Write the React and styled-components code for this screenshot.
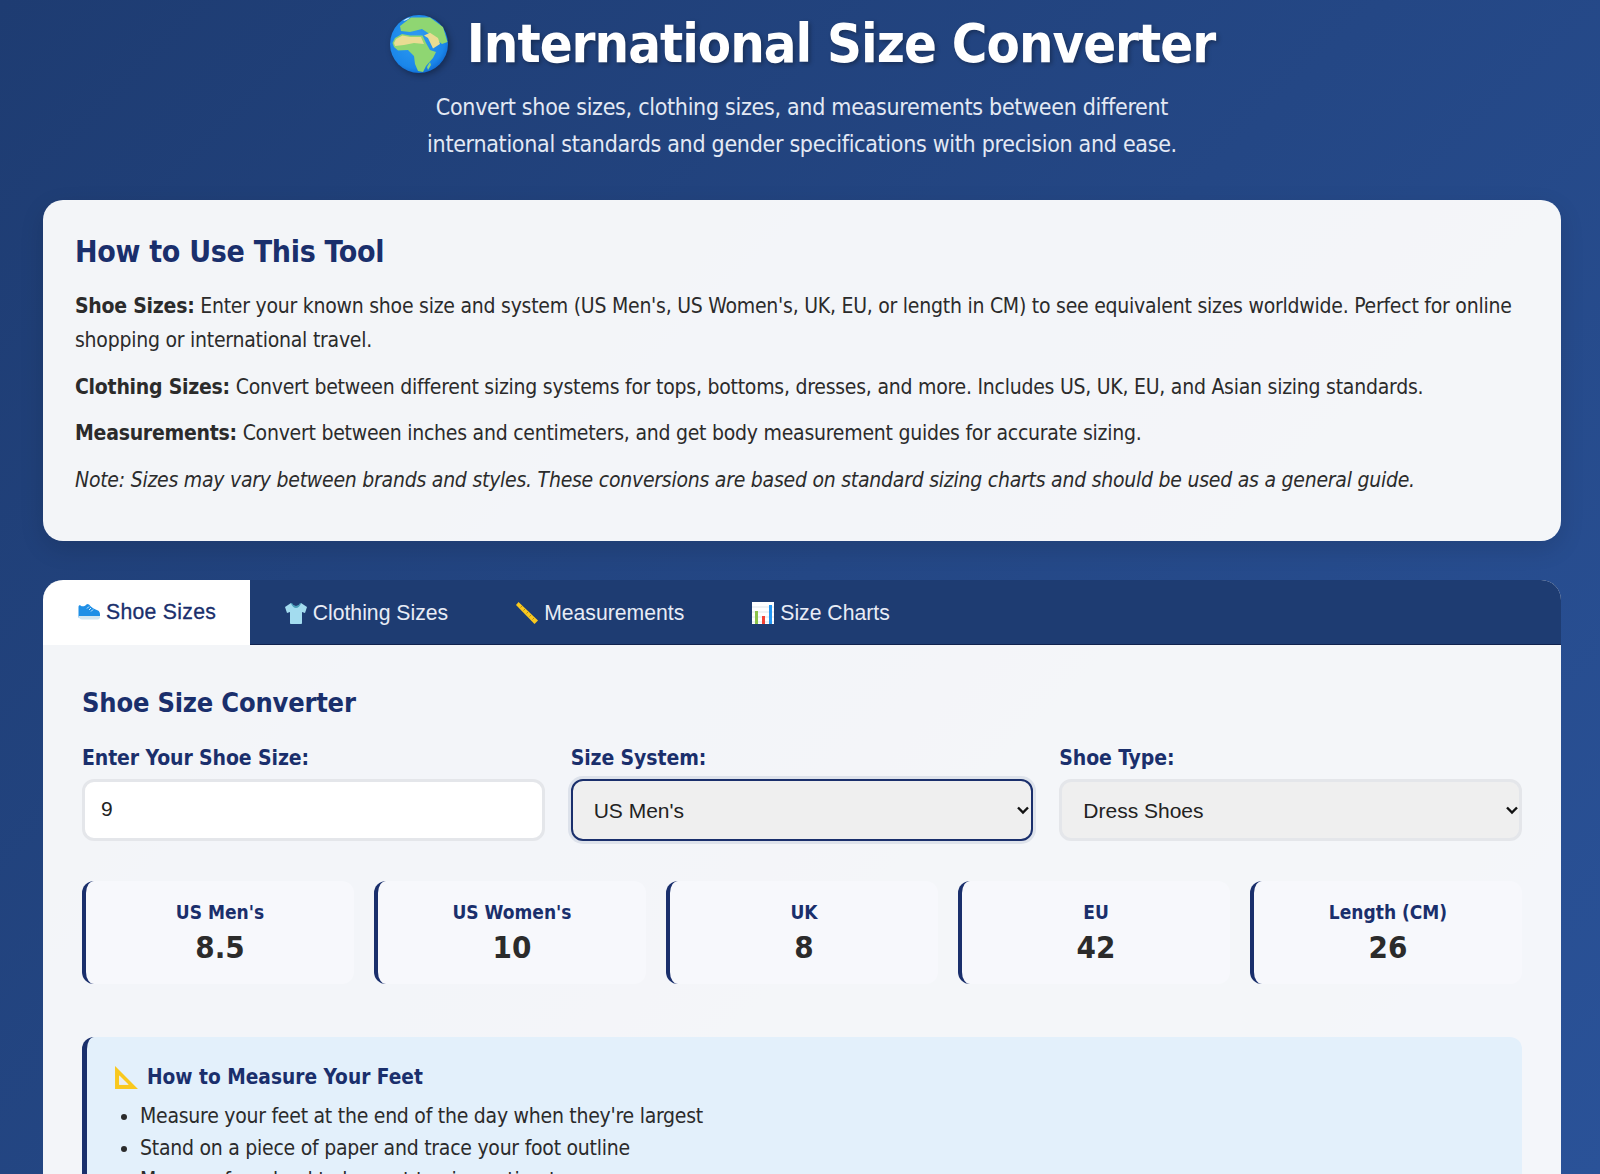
import React from "react";
import styled, { createGlobalStyle } from "styled-components";

const Global = createGlobalStyle`
  html, body { margin: 0; padding: 0; height: 1174px; overflow: hidden; }
  body { font-family: "DejaVu Sans Condensed", "DejaVu Sans", sans-serif; font-stretch: condensed; background: linear-gradient(135deg, #1e3c72 0%, #2a5298 100%); color: #222; }
  * { box-sizing: border-box; }
`;
const navy = "#1a2f6c";
const Page = styled.div`padding: 0 39px 0 43px;`;
const Header = styled.header`text-align: center; padding-top: 10px; margin-bottom: 38px; color: #fff;`;
const Title = styled.h1`
  margin: 0 0 11px; display: flex; justify-content: center; align-items: center; gap: 18px;
  font-size: 54px; letter-spacing: -1px; line-height: 68px; font-weight: 700; text-shadow: 2px 2px 4px rgba(0,0,0,.3);
`;
const Sub = styled.p`margin: 0 auto; width: 800px; font-size: 23px; letter-spacing: -.3px; line-height: 36.5px; color: #e3e9f4;`;
const Card = styled.section`
  background: rgba(255,255,255,.95); border-radius: 20px; padding: 33px 32px 32px; height: 341px; margin-bottom: 39px;
  box-shadow: 0 8px 24px rgba(0,0,0,.12);
`;
const CardTitle = styled.h2`margin: 0 0 18px; font-size: 30px; letter-spacing: -.3px; line-height: 38px; color: ${navy}; font-weight: 700;`;
const Para = styled.p`margin: 0 0 12.7px; font-size: 21px; letter-spacing: -.24px; line-height: 34px; color: #2b2b2b; strong { font-weight: 700; } em { font-style: italic; }`;
const Panel = styled.section`background: rgba(255,255,255,.95); border-radius: 20px 20px 0 0; overflow: hidden; height: 700px;`;
const TabBar = styled.nav`display: flex; background: #1e3c72; height: 65px; border-bottom: 1px solid #10224e;`;
const Tab = styled.div`
  display: flex; align-items: center; gap: 5px; height: ${p => p.$active ? "65px" : "64px"};
  padding: ${p => p.$active ? "0 34px 1px" : "2px 33.5px 0"};
  font-family: "Liberation Sans", Arial, sans-serif; font-stretch: normal; font-size: 21.2px;
  letter-spacing: ${p => p.$active ? ".3px" : "0"};
  background: ${p => p.$active ? "#fff" : "transparent"}; color: ${p => p.$active ? navy : "#e8ecf6"};
  -webkit-text-stroke: ${p => p.$active ? ".3px " + navy : "0"};
`;
const Body = styled.div`padding: 40px 39px;`;
const SectionTitle = styled.h3`margin: 1px 0 25px; font-size: 27px; letter-spacing: -.2px; line-height: 34px; color: ${navy}; font-weight: 700;`;
const Form = styled.div`display: grid; grid-template-columns: repeat(3, 1fr); gap: 26px; margin-bottom: 40px;`;
const Field = styled.div`display: flex; flex-direction: column;`;
const Label = styled.label`font-size: 21px; letter-spacing: -.1px; line-height: 26px; font-weight: 700; color: ${navy}; margin-bottom: 8px;`;
const Input = styled.input`
  height: 62px; border: 3px solid #e4e6ea; border-radius: 12px; padding: 0 16px 2px; background: #fff;
  font-family: "Liberation Sans", Arial, sans-serif; font-stretch: normal; font-size: 21px; color: #222; outline: none;
`;
const SelectWrap = styled.div`position: relative; display: flex;`;
const Select = styled.select`
  flex: 1; height: 62px; appearance: none; border: ${p => p.$focus ? "2.5px solid " + navy : "3px solid #e4e6ea"}; border-radius: 12px; padding: 0 21px; background: #efefef;
  font-family: "Liberation Sans", Arial, sans-serif; font-stretch: normal; font-size: 21px; color: #222; outline: none;
  box-shadow: ${p => p.$focus ? "0 0 0 3px rgba(30,60,114,.1)" : "none"};
`;
const Chevron = styled.svg`position: absolute; right: 3px; top: 24px; width: 14px; height: 14px; pointer-events: none;`;
const Results = styled.div`display: grid; grid-template-columns: repeat(5, 1fr); gap: 20px; margin-bottom: 53px;`;
const Result = styled.div`
  height: 103px; background: #f7f8fc; border-left: 4px solid ${navy}; border-radius: 12px; text-align: center; padding-top: 19px;
`;
const ResultLabel = styled.div`font-size: 19px; line-height: 24px; font-weight: 700; color: ${navy};`;
const ResultValue = styled.div`font-size: 31px; line-height: 46px; font-weight: 700; color: #2b2b2b;`;
const Guide = styled.div`background: #e3f0fb; border-left: 5px solid ${navy}; border-radius: 12px; padding: 25px 27px; height: 300px;`;
const GuideTitle = styled.h4`margin: 0 0 8px; display: flex; align-items: center; gap: 8px; font-size: 20.7px; line-height: 30px; color: ${navy}; font-weight: 700;`;
const List = styled.ul`margin: 0; padding-left: 26px; font-size: 21px; letter-spacing: -.25px; line-height: 32px; color: #2b2b2b;`;

const Globe = () => (
  <svg width="60" height="60" viewBox="0 0 60 60" style={{filter:"drop-shadow(2px 2px 3px rgba(0,0,0,.35))"}}>
    <defs><radialGradient id="o" cx=".45" cy=".42" r=".62"><stop offset="0" stopColor="#2f9df2"/><stop offset=".8" stopColor="#1a86ea"/><stop offset="1" stopColor="#0f68d0"/></radialGradient></defs>
    <circle cx="30" cy="30" r="29" fill="url(#o)"/>
    <path fill="#8fd672" d="M11 12L22 3.500l19 0 13 9.500 4.500 15-5.500 2-5-4-9-7-6-4-12 3-9-1z"/>
    <path fill="#e9dc92" d="M35 21.500l6-2.800 8 5.300 2 6-7 4.600-5-10.600z"/>
    <path fill="#8fd672" d="M3.500 29L6 24l7-4 8 1.500 12.500 0L37 29l4 7 6 2-3 6-7 8-3 6-5-1-3-7-1-8-6-6-10 .5L5 33z"/>
    <path fill="#e9dc92" d="M5 29l2-4 6.500-3.500 8 1.500 10.500 0 3 7-10-1-10 2-9 1z"/>
    <path fill="#8fd672" d="M38 53l3-5 1 3-3 5z"/>
    <path fill="#dff3ff" d="M14 7c2-2 4-3 7-3.500-2 2-4 3-7 3.500z"/>
  </svg>
);
const Shoe = () => (
  <svg width="24" height="24" viewBox="0 0 24 24">
    <path fill="#1f8fe6" d="M1.500 7c0-1.500 1-2 2-1.500 2 1.500 4.500 1 6.500-1.500l2 .5c2 3 6 5 9 6 1 .5 2 2 2 4v3H1.500z"/>
    <path fill="#d2e6f1" d="M1.500 16H23c.5 2-1 3.500-2.500 3.500H5C3 19.500 2 18 1.500 16z"/>
    <path stroke="#d5eefb" strokeWidth="1" d="M12 6.500l-2 2M14 8l-2 2M16 9.500l-2 2"/>
  </svg>
);
const Shirt = () => (
  <svg width="24" height="24" viewBox="0 0 24 24">
    <path fill="#a3dcef" d="M7 2l-6 4 2 6 3-1v11c0 .6.5 1 1 1h10c.5 0 1-.4 1-1V11l3 1 2-6-6-4c-1 2-3 3-5 3s-4-1-5-3z"/>
    <path fill="#4a9fb8" d="M8 2c1 2 2 3 4 3s3-1 4-3l1 .5C16 5 14 7 12 7S8 5 7 2.500z"/>
  </svg>
);
const Ruler = () => (
  <svg width="24" height="24" viewBox="0 0 24 24">
    <path fill="#f9c81e" d="M3.500 1L23 19.500 19.500 23 1 4z"/>
    <path stroke="#b98a0c" strokeWidth="1" d="M7 5l-1.500 1.500M10 8L8.500 9.500M13 11l-1.500 1.500M16 14l-1.500 1.500M19 17l-1.500 1.500"/>
  </svg>
);
const Chart = () => (
  <svg width="24" height="24" viewBox="0 0 24 24">
    <rect x="1" y="1" width="22" height="22" fill="#fff"/>
    <path stroke="#dfe5ea" d="M1 6h22M1 11h22M1 16h22M1 21h22"/>
    <rect x="4" y="10" width="3" height="13" fill="#8bc34a"/>
    <rect x="11" y="15" width="3" height="8" fill="#f44336"/>
    <rect x="18" y="4" width="3" height="19" fill="#2196f3"/>
  </svg>
);
const SetSquare = () => (
  <svg width="25" height="25" viewBox="0 0 24 24">
    <path fillRule="evenodd" fill="#f9c81e" d="M1 1l22 22H1zM5 10v9h9z"/>
    <path fill="#eaeef2" d="M5 10v9h9z"/>
  </svg>
);
const Arrow = () => (
  <Chevron viewBox="0 0 14 14"><path d="M2 4.500l5 5 5-5" fill="none" stroke="#111" strokeWidth="2.400"/></Chevron>
);

const results = [["US Men's","8.5"],["US Women's","10"],["UK","8"],["EU","42"],["Length (CM)","26"]];

export default function App() {
  return (
    <Page>
      <Global />
      <Header>
        <Title><Globe /><span>International Size Converter</span></Title>
        <Sub>Convert shoe sizes, clothing sizes, and measurements between different international standards and gender specifications with precision and ease.</Sub>
      </Header>
      <Card>
        <CardTitle>How to Use This Tool</CardTitle>
        <Para><strong>Shoe Sizes:</strong> Enter your known shoe size and system (US Men's, US Women's, UK, EU, or length in CM) to see equivalent sizes worldwide. Perfect for online shopping or international travel.</Para>
        <Para><strong>Clothing Sizes:</strong> Convert between different sizing systems for tops, bottoms, dresses, and more. Includes US, UK, EU, and Asian sizing standards.</Para>
        <Para><strong>Measurements:</strong> Convert between inches and centimeters, and get body measurement guides for accurate sizing.</Para>
        <Para><em>Note: Sizes may vary between brands and styles. These conversions are based on standard sizing charts and should be used as a general guide.</em></Para>
      </Card>
      <Panel>
        <TabBar>
          <Tab $active><Shoe />Shoe Sizes</Tab>
          <Tab><Shirt />Clothing Sizes</Tab>
          <Tab><Ruler />Measurements</Tab>
          <Tab><Chart />Size Charts</Tab>
        </TabBar>
        <Body>
          <SectionTitle>Shoe Size Converter</SectionTitle>
          <Form>
            <Field><Label>Enter Your Shoe Size:</Label><Input defaultValue="9" /></Field>
            <Field><Label>Size System:</Label><SelectWrap><Select $focus><option>US Men's</option></Select><Arrow /></SelectWrap></Field>
            <Field><Label>Shoe Type:</Label><SelectWrap><Select><option>Dress Shoes</option></Select><Arrow /></SelectWrap></Field>
          </Form>
          <Results>
            {results.map(([l,v]) => <Result key={l}><ResultLabel>{l}</ResultLabel><ResultValue>{v}</ResultValue></Result>)}
          </Results>
          <Guide>
            <GuideTitle><SetSquare />How to Measure Your Feet</GuideTitle>
            <List>
              <li>Measure your feet at the end of the day when they're largest</li>
              <li>Stand on a piece of paper and trace your foot outline</li>
              <li>Measure from heel to longest toe in centimeters</li>
            </List>
          </Guide>
        </Body>
      </Panel>
    </Page>
  );
}
